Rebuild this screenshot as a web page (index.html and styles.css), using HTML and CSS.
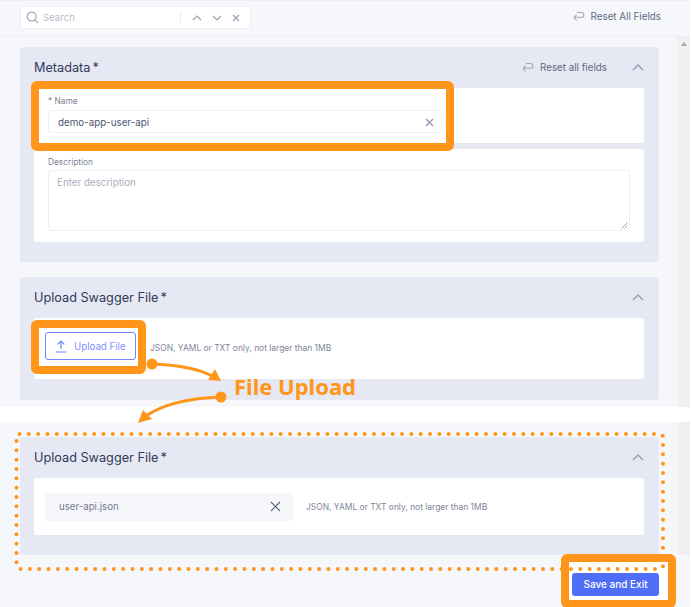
FILE: index.html
```html
<!DOCTYPE html>
<html lang="en">
<head>
<meta charset="utf-8">
<title>Upload Swagger File</title>
<link rel="stylesheet" href="styles.css">
</head>
<body>
<div class="stage">
  <section class="shot shot-top">
    <header class="toolbar">
      <div class="search">
        <svg class="ic-search" width="13" height="13" viewBox="0 0 13 13"><circle cx="5.6" cy="5.6" r="4.4"/><path d="M8.9 8.9L12 12"/></svg>
        <span class="search-text">Search</span>
        <span class="divider"></span>
        <svg class="ic-nav" width="10" height="6" viewBox="0 0 10 6"><path d="M1 5l4-4 4 4"/></svg>
        <svg class="ic-nav" width="10" height="6" viewBox="0 0 10 6"><path d="M1 1l4 4 4-4"/></svg>
        <svg class="ic-nav" width="8" height="8" viewBox="0 0 8 8"><path d="M1 1l6 6M7 1L1 7"/></svg>
      </div>
      <div class="reset reset-top">
        <svg class="ic-reset" width="12" height="11" viewBox="0 0 12 11"><path d="M4 1.5H8.5a2.4 2.4 0 0 1 0 4.8H1M1 6.3l2.6-2.4M1 6.3l2.6 3.2"/></svg>
        <span>Reset All Fields</span>
      </div>
    </header>
    <div class="scroller scroller-top">
      <main class="content">
        <section class="panel panel-meta">
          <div class="panel-head">
            <h2>Metadata<span class="req">*</span></h2>
            <div class="reset">
              <svg class="ic-reset" width="12" height="11" viewBox="0 0 12 11"><path d="M4 1.5H8.5a2.4 2.4 0 0 1 0 4.8H1M1 6.3l2.6-2.4M1 6.3l2.6 3.2"/></svg>
              <span>Reset all fields</span>
            </div>
            <svg class="ic-collapse" width="12" height="7" viewBox="0 0 12 7"><path d="M1 6l5-5 5 5"/></svg>
          </div>
          <div class="card card-name">
            <label class="label">* Name</label>
            <div class="input">
              <span>demo-app-user-api</span>
              <svg class="ic-clear" width="9" height="9" viewBox="0 0 9 9"><path d="M1 1l7 7M8 1L1 8"/></svg>
            </div>
          </div>
          <div class="card card-desc">
            <label class="label">Description</label>
            <div class="textarea">
              <span>Enter description</span>
              <svg class="ic-grip" width="7" height="7" viewBox="0 0 7 7"><path d="M0.5 6.5l6-6M3.5 6.5l3-3"/></svg>
            </div>
          </div>
        </section>
        <section class="panel panel-upload">
          <div class="panel-head">
            <h2>Upload Swagger File<span class="req">*</span></h2>
            <svg class="ic-collapse" width="12" height="7" viewBox="0 0 12 7"><path d="M1 6l5-5 5 5"/></svg>
          </div>
          <div class="card card-upload">
            <button class="btn-upload">
              <svg width="12" height="13" viewBox="0 0 12 13"><path d="M6 9V1.2M2.6 4.4L6 1l3.4 3.4M.5 12h11"/></svg>
              <span>Upload File</span>
            </button>
            <span class="hint">JSON, YAML or TXT only, not larger than 1MB</span>
          </div>
        </section>
      </main>
      <div class="scrollbar"><i class="sb-arrow"></i></div>
    </div>
  </section>

  <section class="shot shot-bottom">
    <div class="scroller">
      <main class="content content-bottom">
        <section class="panel panel-file">
          <div class="panel-head">
            <h2>Upload Swagger File<span class="req">*</span></h2>
            <svg class="ic-collapse" width="12" height="7" viewBox="0 0 12 7"><path d="M1 6l5-5 5 5"/></svg>
          </div>
          <div class="card card-file">
            <div class="file">
              <span>user-api.json</span>
              <svg width="11" height="11" viewBox="0 0 11 11"><path d="M1 1l9 9M10 1L1 10"/></svg>
            </div>
            <span class="hint">JSON, YAML or TXT only, not larger than 1MB</span>
          </div>
        </section>
      </main>
      <div class="scrollbar"></div>
    </div>
    <footer class="footer">
      <div class="save-frame"><button class="btn-save">Save and Exit</button></div>
    </footer>
  </section>

  <div class="mark mark-name"></div>
  <div class="mark mark-upload"></div>
  <svg class="overlay" width="691" height="607" viewBox="0 0 691 607">
    <rect class="dots" x="16.5" y="434" width="646.5" height="135" rx="3"/>
    <circle class="blob" cx="152" cy="364" r="5.5"/>
    <path class="curve" d="M152 364C180 365 200 369 214 377"/>
    <path class="blob" d="M221 381L208 380L215 369Z"/>
    <circle class="blob" cx="221" cy="397" r="5.5"/>
    <path class="curve" d="M221 397C190 398 165 403 146 416"/>
    <path class="blob" d="M138 423L143 410L152 419Z"/>
  </svg>
  <div class="callout">File Upload</div>
</div>
</body>
</html>
```
FILE: styles.css
```css
* { box-sizing: border-box; }
html, body { margin: 0; padding: 0; background: #fff; }
body { width: 691px; height: 607px; overflow: hidden; font-family: Inter, "Liberation Sans", sans-serif; }

.stage { position: relative; width: 690px; height: 607px; display: flex; flex-direction: column; gap: 15px; }
.shot { background: #f6f7fb; }
.shot-top { height: 407px; border-top: 1px solid #eceef6; }
.shot-bottom { height: 185px; display: flex; flex-direction: column; }

.toolbar { height: 36px; padding: 5px 29px 0 20px; display: flex; justify-content: space-between; align-items: flex-start; border-bottom: 1px solid #eceef5; }
.search { width: 231px; height: 23px; background: #fff; border: 1px solid #eff0f7; border-radius: 3px; display: flex; align-items: center; padding-left: 5px; }
.search svg { fill: none; flex: none; }
.ic-search { stroke: #a0a7b8; stroke-width: 1.2; }
.search-text { font-size: 9.6px; color: #b8bdcb; margin-left: 4px; width: 146px; }
.divider { width: 1px; height: 13px; background: #e9ebf2; margin-right: 11px; }
.ic-nav { stroke: #9aa1b3; stroke-width: 1.2; margin-right: 10px; }

.reset { display: flex; align-items: center; gap: 6px; font-size: 9.8px; color: #5f6982; white-space: nowrap; }
.reset-top { margin-top: 5px; }
.ic-reset { fill: none; stroke: #a3a9ba; stroke-width: 1.1; }

.scroller { display: flex; flex: 1; }
.scroller-top { height: 370px; }
.content { flex: 1; padding: 10px 19px 0 20px; display: flex; flex-direction: column; gap: 15px; }
.content-bottom { padding-top: 15px; }
.scrollbar { width: 12px; background: #f0f0f1; position: relative; }
.sb-arrow { position: absolute; left: 3px; top: 5px; border: 3px solid transparent; border-top: 0; border-bottom: 4px solid #a9a9a9; }

.panel { background: #e6e8f3; border-radius: 3px; padding: 0 15px 0 14px; }
.panel-meta { height: 215px; }
.panel-upload { height: 123px; }
.panel-file { height: 118px; }
.panel-head { height: 41px; display: flex; align-items: center; }
h2 { margin: 0; font-size: 12.7px; font-weight: 400; color: #303b5c; flex: 1; white-space: nowrap; }
.req { margin-left: 2px; }
.panel-head .reset { margin-right: 25px; }
.ic-collapse { fill: none; stroke: #9aa1b5; stroke-width: 1.5; }

.card { background: #fff; border-radius: 3px; }
.card-name { height: 55px; padding: 8px 14px; margin-bottom: 6px; }
.card-desc { height: 93px; padding: 8px 14px; }
.label { display: block; font-size: 8.3px; line-height: 11px; color: #7e8493; margin-bottom: 3px; }
.card-desc .label { margin-bottom: 2px; }
.input { width: 394px; height: 23px; border: 1px solid #eff0f7; border-radius: 3px; display: flex; align-items: center; justify-content: space-between; padding: 1px 7px 0 9px; font-size: 9.8px; color: #4b5570; }
.ic-clear { fill: none; stroke: #8f96a8; stroke-width: 1.3; }
.textarea { position: relative; height: 61px; border: 1px solid #eff0f7; border-radius: 3px; padding: 6px 8px; font-size: 9.8px; color: #a9aebd; }
.ic-grip { position: absolute; right: 1px; bottom: 1px; fill: none; stroke: #a5a5a5; stroke-width: 1; }

.card-upload { height: 61px; padding: 14px 11px 0; display: flex; align-items: flex-start; }
.btn-upload { width: 91px; height: 28px; padding: 0 0 0 9px; background: #fff; border: 1px solid #7187ff; border-radius: 3px; display: flex; align-items: center; gap: 7px; font: inherit; font-size: 9.7px; color: #7f8fff; }
.btn-upload svg { fill: none; stroke: #6f82fb; stroke-width: 1.2; }
.hint { font-size: 8.45px; color: #80869a; white-space: nowrap; }
.card-upload .hint { margin: 11px 0 0 14px; }

.card-file { height: 57px; padding: 14px 11px; display: flex; align-items: center; gap: 13px; }
.file { width: 248px; height: 28px; background: #f6f7fb; display: flex; align-items: center; justify-content: space-between; padding: 0 12px 0 14px; font-size: 9.7px; color: #747b8e; }
.file svg { fill: none; stroke: #5b6379; stroke-width: 1.1; }

.footer { display: flex; justify-content: flex-end; padding-right: 14px; height: 55px; }
.save-frame { width: 115px; height: 54px; border: 8px solid #ff961a; border-radius: 6px; background: #fff; padding: 10px 9px 5px 3px; margin-top: -1px; }
.btn-save { width: 87px; height: 23px; padding: 0; border: 0; border-radius: 3px; background: #4f6ef7; color: #fff; font: inherit; font-size: 10px; font-weight: 500; }

.mark { position: absolute; border: 8px solid #ff961a; border-radius: 6px; }
.mark-name { left: 31px; top: 81px; width: 423px; height: 70px; }
.mark-upload { left: 31px; top: 320px; width: 115px; height: 54px; }

.overlay { position: absolute; left: 0; top: 0; pointer-events: none; }
.dots { fill: none; stroke: #ff961a; stroke-width: 4; stroke-linecap: round; stroke-dasharray: 0 9.33; }
.blob { fill: #ff961a; }
.curve { fill: none; stroke: #ff961a; stroke-width: 3; }
.callout { position: absolute; left: 234px; top: 372px; font-family: "Noto Sans", sans-serif; font-size: 22px; line-height: 29px; font-weight: 700; color: #ff961a; white-space: nowrap; }
```
